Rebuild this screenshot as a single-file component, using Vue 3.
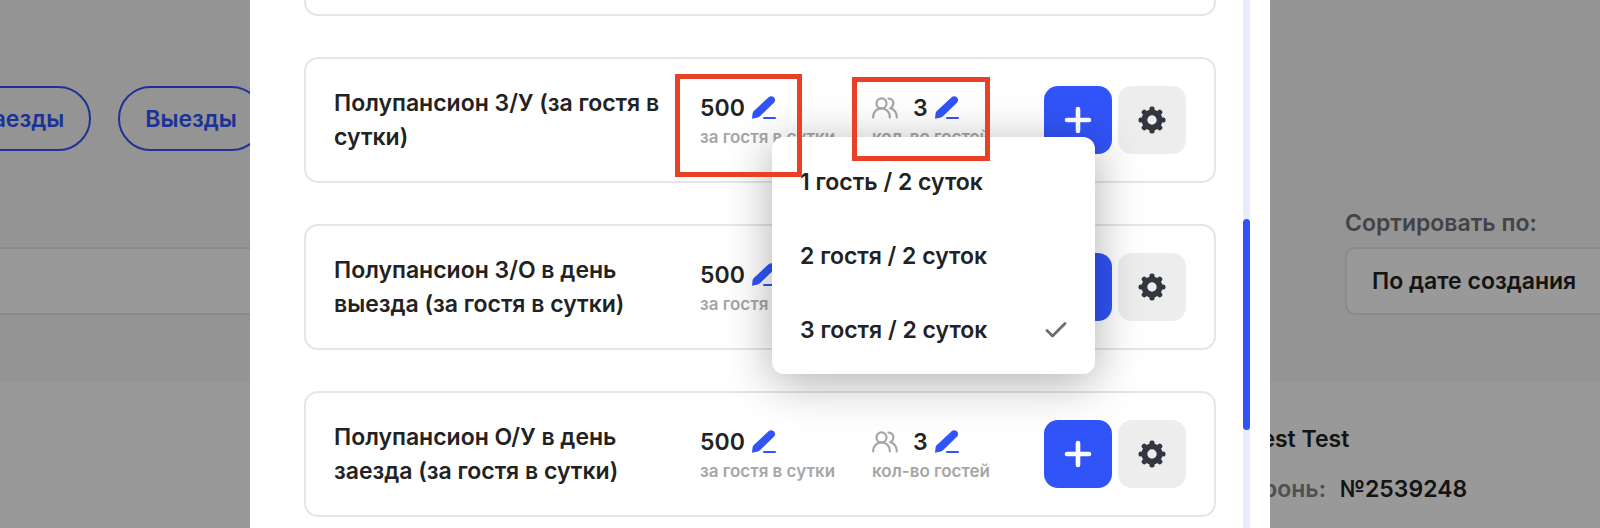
<script setup>
import { ref } from 'vue'

const search = ref('')
const sortBy = ref('created')
const guests = ref(3)

const services = [
  { id: 1, name: 'Полупансион З/У (за гостя в сутки)', price: 500, menu: true },
  { id: 2, name: 'Полупансион З/О в день выезда (за гостя в сутки)', price: 500 },
  { id: 3, name: 'Полупансион О/У в день заезда (за гостя в сутки)', price: 500 },
]

const guestOptions = [
  { value: 1, label: '1 гость / 2 суток' },
  { value: 2, label: '2 гостя / 2 суток' },
  { value: 3, label: '3 гостя / 2 суток' },
]
</script>

<template>
  <div class="page">
    <section class="filters">
      <div class="chips">
        <button class="chip">Заезды</button>
        <button class="chip">Выезды</button>
      </div>

      <div class="filter-row">
        <input v-model="search" class="search" type="text" aria-label="Поиск" />
        <div class="sort">
          <label for="sort">Сортировать по:</label>
          <select id="sort" v-model="sortBy">
            <option value="created">По дате создания</option>
          </select>
        </div>
      </div>
    </section>

    <section class="booking">
      <div class="guest-name">Test Test</div>
      <div class="booking-num"><span>Бронь:</span> №2539248</div>
    </section>

    <div class="overlay">
      <div class="modal">
        <div class="services">
          <div class="service service-prev"></div>

          <div v-for="item in services" :key="item.id" class="service">
            <div class="service-name">{{ item.name }}</div>

            <div class="field">
              <div class="field-value">
                <span>{{ item.price }}</span>
                <button class="edit" aria-label="Изменить цену">
                  <svg width="24" height="24" viewBox="0 0 24 24">
                    <path d="M0 22.8 L.6 17.2 Q.8 16 1.6 15.2 L16.6 1.2 Q19 -.6 21.6 1 Q24.2 3.4 22.4 6.2 L8 20.2 Q7 21.2 5.8 21.6 Z" fill="#3154f8" />
                    <path d="M12 21.9 H23" stroke="#3154f8" stroke-width="2" stroke-linecap="round" />
                  </svg>
                </button>
              </div>
              <div class="field-label">за гостя в сутки</div>
            </div>

            <div class="field">
              <div class="field-value">
                <svg class="users" width="26" height="22" viewBox="0 0 26 22" fill="none" stroke="#a6a6a6" stroke-width="2.2" stroke-linecap="round">
                  <circle cx="9.5" cy="6.4" r="5" />
                  <path d="M1.2 20.5 V19.6 A8.3 8.2 0 0 1 17.8 19.6 V20.5" />
                  <path d="M16.5 1.6 C20 1.6 21.6 4 21.4 6.6 C21.2 8.8 20 10 18.6 11.2 C22.6 12.6 24.8 15.6 24.8 20.5" />
                </svg>
                <span>{{ guests }}</span>
                <button class="edit" aria-label="Изменить количество гостей">
                  <svg width="24" height="24" viewBox="0 0 24 24">
                    <path d="M0 22.8 L.6 17.2 Q.8 16 1.6 15.2 L16.6 1.2 Q19 -.6 21.6 1 Q24.2 3.4 22.4 6.2 L8 20.2 Q7 21.2 5.8 21.6 Z" fill="#3154f8" />
                    <path d="M12 21.9 H23" stroke="#3154f8" stroke-width="2" stroke-linecap="round" />
                  </svg>
                </button>
              </div>
              <div class="field-label">кол-во гостей</div>
            </div>

            <div class="actions">
              <button class="action add" aria-label="Добавить">
                <svg width="28" height="28" viewBox="0 0 28 28">
                  <path d="M14 3 V25 M3 14 H25" stroke="#fff" stroke-width="4.6" stroke-linecap="round" />
                </svg>
              </button>
              <button class="action" aria-label="Настройки">
                <svg width="28" height="28" viewBox="-14 -14 28 28">
                  <g fill="#32363f">
                    <rect v-for="n in 8" :key="n" x="-2.6" y="-13.5" width="5.2" height="8" rx="2.2" :transform="`rotate(${n * 45})`" />
                  </g>
                  <circle r="7.6" fill="none" stroke="#32363f" stroke-width="5.8" />
                </svg>
              </button>
            </div>

            <template v-if="item.menu">
              <ul class="menu">
                <li v-for="option in guestOptions" :key="option.value">
                  <button class="menu-item" @click="guests = option.value">
                    {{ option.label }}
                    <svg v-if="option.value === guests" width="22" height="18" viewBox="0 0 22 18" fill="none">
                      <path d="M2 9.5 L7.5 15 L20 2.5" stroke="#6c6c74" stroke-width="2.8" stroke-linecap="round" stroke-linejoin="round" />
                    </svg>
                  </button>
                </li>
              </ul>
              <div class="mark mark-price"></div>
              <div class="mark mark-guests"></div>
            </template>
          </div>
        </div>

        <div class="scroll-track">
          <div class="scroll-thumb"></div>
        </div>
      </div>
    </div>
  </div>
</template>

<style>
body {
  margin: 0;
}
</style>

<style scoped>
.page {
  position: relative;
  height: 100vh;
  overflow: hidden;
  background: #fff;
  color: #222;
  font-family: Inter, 'Noto Sans', sans-serif;
  font-size: 23px;
  font-weight: 600;
}

.page * {
  box-sizing: border-box;
}

button,
input,
select {
  font: inherit;
  color: inherit;
}

.filters {
  padding-top: 86px;
  height: 382px;
  background: #f7f7f7;
}

.chips {
  display: flex;
  gap: 27px;
  margin-left: -49px;
}

.chip {
  height: 65px;
  padding: 0 25px;
  border: 2px solid #2f54fb;
  border-radius: 33px;
  background: none;
  color: #2f54fb;
}

.filter-row {
  display: flex;
  align-items: flex-end;
  gap: 120px;
  margin: 56px -60px 0 -20px;
}

.search {
  flex: 1;
  height: 68px;
  border: 2px solid #e6e6e6;
  background: #fff;
}

.sort {
  display: flex;
  flex-direction: column;
  gap: 8px;
  width: 315px;
}

.sort label {
  line-height: 32px;
  color: #6f7176;
}

.sort select {
  height: 68px;
  padding: 0 25px;
  border: 2px solid #e6e6e6;
  border-radius: 10px;
  background: #fff;
  appearance: none;
}

.booking {
  display: flex;
  flex-direction: column;
  gap: 16px;
  padding: 40px 0 0 1248px;
  line-height: 34px;
}

.booking-num {
  white-space: nowrap;
}

.booking-num span {
  margin-right: 8px;
  color: #858585;
}

.overlay {
  position: absolute;
  inset: 0;
  display: flex;
  padding: 0 330px 0 250px;
  background: rgba(0, 0, 0, 0.4);
}

.modal {
  flex: 1;
  display: flex;
  gap: 27px;
  padding: 0 20px 0 54px;
  background: #fff;
}

.services {
  flex: 1;
  display: flex;
  flex-direction: column;
  gap: 41px;
}

.service {
  position: relative;
  display: flex;
  flex-shrink: 0;
  align-items: center;
  padding: 27px 28px;
  border: 2px solid #e6e6e6;
  border-radius: 14px;
}

.service-prev {
  height: 16px;
  padding: 0;
  border-top: 0;
  border-radius: 0 0 14px 14px;
}

.service-name {
  flex: 1;
  padding-right: 28px;
  line-height: 34px;
}

.field {
  width: 172px;
}

.field-value {
  display: flex;
  align-items: center;
  gap: 7px;
  height: 34px;
}

.field-label {
  font-size: 17px;
  line-height: 24px;
  white-space: nowrap;
  color: #a6a6a6;
}

.users {
  margin-right: 8px;
}

.edit {
  display: flex;
  padding: 0;
  border: 0;
  background: none;
}

.actions {
  display: flex;
  gap: 6px;
}

.action {
  display: flex;
  align-items: center;
  justify-content: center;
  width: 68px;
  height: 68px;
  padding: 0;
  border: 0;
  border-radius: 14px;
  background: #ededed;
}

.add {
  background: #3154f8;
}

.menu {
  position: absolute;
  top: 78px;
  right: 119px;
  z-index: 2;
  width: 323px;
  margin: 0;
  padding: 8px 0 7px;
  list-style: none;
  border-radius: 12px;
  background: #fff;
  box-shadow: 0 8px 48px rgba(0, 0, 0, 0.32);
}

.menu-item {
  display: flex;
  align-items: center;
  justify-content: space-between;
  width: 100%;
  height: 74px;
  padding: 0 28px;
  border: 0;
  background: none;
}

.mark {
  position: absolute;
  z-index: 3;
  border: 5px solid #e84127;
  pointer-events: none;
}

.mark-price {
  top: 15px;
  right: 412px;
  width: 127px;
  height: 103px;
}

.mark-guests {
  top: 18px;
  right: 224px;
  width: 138px;
  height: 84px;
}

.scroll-track {
  width: 7px;
  background: #e9ecff;
}

.scroll-thumb {
  height: 211px;
  margin-top: 219px;
  border-radius: 4px;
  background: #3154f8;
}
</style>
